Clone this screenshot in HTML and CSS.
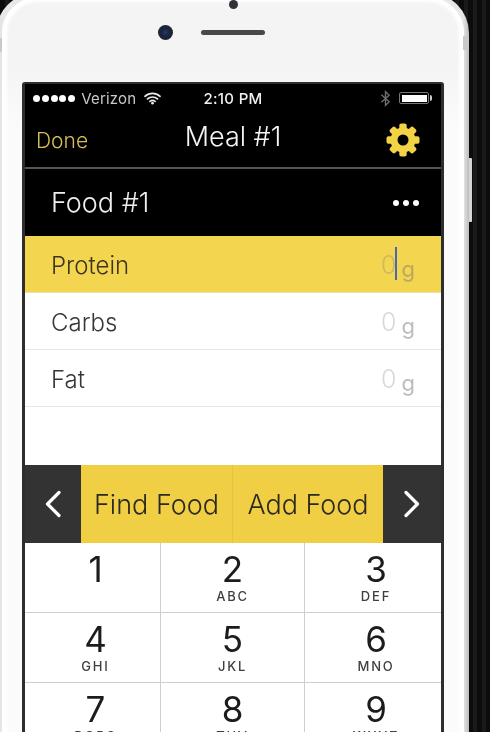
FILE: index.html
```html
<!DOCTYPE html>
<html lang="en">
<head>
<meta charset="utf-8">
<title>Meal #1</title>
<link rel="stylesheet" href="styles.css">
</head>
<body>
<div class="stage">
  <div class="phone">
    <span class="band band-left"></span>
    <span class="band band-right"></span>
    <span class="side-button"></span>
    <div class="face">
      <div class="sensors">
        <span class="sensor-dot"></span>
        <span class="speaker"><span class="camera"></span></span>
      </div>
      <div class="screen">
        <div class="status">
          <div class="status-left">
            <span class="signal"><i></i><i></i><i></i><i></i><i></i></span>
            <span class="carrier">Verizon</span>
            <svg class="wifi" viewBox="0 0 18 14" aria-hidden="true">
              <path d="M1 5.2C5.6 1 12.4 1 17 5.2M3.7 8C6.8 5.3 11.2 5.3 14.300 8M6.300 10.600C7.900 9.300 10.100 9.300 11.700 10.600"/>
              <circle cx="9" cy="12.500" r="1.400"/>
            </svg>
          </div>
          <span class="time">2:10 PM</span>
          <div class="status-right">
            <svg class="bluetooth" viewBox="0 0 12 18" aria-hidden="true">
              <path d="M1.500 5L10 12.500L6 16.500V1.500L10 5.500L1.500 13"/>
            </svg>
            <span class="battery"><span class="battery-fill"></span></span>
          </div>
        </div>
        <div class="nav">
          <span class="done">Done</span>
          <span class="nav-title">Meal #1</span>
          <svg class="gear" viewBox="0 0 34 34" aria-hidden="true">
            <rect x="13.300" y="0.500" width="7.400" height="33" rx="2"/>
            <rect x="13.300" y="0.500" width="7.400" height="33" rx="2" transform="rotate(45 17 17)"/>
            <rect x="13.300" y="0.500" width="7.400" height="33" rx="2" transform="rotate(90 17 17)"/>
            <rect x="13.300" y="0.500" width="7.400" height="33" rx="2" transform="rotate(135 17 17)"/>
            <circle cx="17" cy="17" r="12.500"/>
            <circle class="gear-hole" cx="17" cy="17" r="5.500"/>
          </svg>
        </div>
        <div class="food-header">
          <span>Food #1</span>
          <span class="more"><i></i><i></i><i></i></span>
        </div>
        <div class="macro macro-active">
          <span>Protein</span>
          <span class="amount"><span class="zero">0</span><span class="caret"></span><span class="unit">g</span></span>
        </div>
        <div class="macro">
          <span>Carbs</span>
          <span class="amount"><span class="zero">0</span><span class="unit">g</span></span>
        </div>
        <div class="macro">
          <span>Fat</span>
          <span class="amount"><span class="zero">0</span><span class="unit">g</span></span>
        </div>
        <div class="blank"></div>
        <div class="actions">
          <span class="arrow">
            <svg viewBox="0 0 18 28" aria-hidden="true"><path d="M15 2.500L3.500 14L15 25.500"/></svg>
          </span>
          <span class="action">Find Food</span>
          <span class="action">Add Food</span>
          <span class="arrow">
            <svg viewBox="0 0 18 28" aria-hidden="true"><path d="M3 2.500L14.500 14L3 25.500"/></svg>
          </span>
        </div>
        <div class="keypad">
          <div class="key"><span class="digit">1</span></div>
          <div class="key"><span class="digit">2</span><span class="letters">ABC</span></div>
          <div class="key"><span class="digit">3</span><span class="letters">DEF</span></div>
          <div class="key"><span class="digit">4</span><span class="letters">GHI</span></div>
          <div class="key"><span class="digit">5</span><span class="letters">JKL</span></div>
          <div class="key"><span class="digit">6</span><span class="letters">MNO</span></div>
          <div class="key"><span class="digit">7</span><span class="letters">PQRS</span></div>
          <div class="key"><span class="digit">8</span><span class="letters">TUV</span></div>
          <div class="key"><span class="digit">9</span><span class="letters">WXYZ</span></div>
        </div>
      </div>
    </div>
  </div>
</div>
</body>
</html>
```

FILE: styles.css
```css
* { box-sizing: border-box; }
html, body { margin: 0; background: #fff; }
body { font-family: Inter, "Liberation Sans", sans-serif; }
i { display: block; }

.stage {
  height: 732px;
  overflow: hidden;
  filter: blur(0.4px);
  background: repeating-linear-gradient(90deg, #0c0c0c 0 5px, #1a1a1a 5px 9px);
}
.phone {
  position: relative;
  width: 473px;
  height: 900px;
  margin: -7px 0 0 -4px;
  padding: 4px 5px 0 6px;
  border-radius: 40px 40px 0 0;
  background: linear-gradient(90deg, #d8d8d8 0, #e8e8e8 6px, #e8e8e8 calc(100% - 6px), #bdbdbd 100%);
}
.band { position: absolute; width: 6px; height: 14px; background: #c9c9c9; }
.band-left { left: 0; top: 45px; }
.band-right { right: 0; top: 43px; }
.side-button {
  position: absolute;
  left: 473px;
  top: 165px;
  width: 3px;
  height: 64px;
  border-radius: 0 1px 1px 0;
  background: #d5d5d5;
}
.face {
  height: 100%;
  padding: 0 20px;
  border-radius: 36px 36px 0 0;
  box-shadow: inset 0 0 3px 5px #fff;
  background: linear-gradient(180deg, #f4f4f5 0, #f4f4f5 70px, #fbfbfb 130px);
}
.sensors {
  height: 85px;
  display: flex;
  flex-direction: column;
  align-items: center;
}
.sensor-dot {
  width: 9px;
  height: 9px;
  margin-top: 3px;
  border-radius: 50%;
  background: #2f3338;
}
.speaker {
  position: relative;
  width: 64px;
  height: 5px;
  margin-top: 21px;
  border-radius: 3px;
  background: #46484b;
}
.camera {
  position: absolute;
  left: -43px;
  top: -5px;
  width: 15px;
  height: 15px;
  border-radius: 50%;
  background: radial-gradient(circle at 50% 50%, #1d3a78 0, #1b2338 40%, #23262c 100%);
}

.screen {
  height: 740px;
  border: solid #2e2e2e;
  border-width: 2px 3px 0;
  border-radius: 3px 3px 0 0;
  background: #fff;
}
.status {
  position: relative;
  height: 40px;
  padding: 0 9px 12px 8px;
  display: flex;
  align-items: center;
  justify-content: space-between;
  background: #000;
}
.status-left { display: flex; align-items: center; gap: 6px; }
.signal { display: flex; gap: 1.800px; }
.signal i { width: 7px; height: 7px; border-radius: 50%; background: #fff; }
.carrier { font-size: 15px; color: #c8c8c8; letter-spacing: 0.200px; }
.wifi { width: 17px; height: 14px; margin-left: 2px; }
.wifi path { fill: none; stroke: #e8e8e8; stroke-width: 1.800; stroke-linecap: round; }
.wifi circle { fill: #e8e8e8; }
.time {
  position: absolute;
  left: 0;
  right: 0;
  top: 5px;
  text-align: center;
  font-size: 15px;
  font-weight: 500;
  letter-spacing: 0.300px;
  color: #f0f0f0;
}
.status-right { display: flex; align-items: center; gap: 8px; }
.bluetooth { width: 11px; height: 17px; }
.bluetooth path { fill: none; stroke: #6e6e6e; stroke-width: 1.500; }
.battery {
  position: relative;
  width: 30px;
  height: 12px;
  padding: 1.500px;
  border: 1px solid #777;
  border-radius: 2px;
  margin-right: 3px;
}
.battery::after {
  content: "";
  position: absolute;
  right: -4px;
  top: 2px;
  width: 2.500px;
  height: 6px;
  border-radius: 0 2px 2px 0;
  background: #ccc;
}
.battery-fill { display: block; height: 100%; background: #fff; }

.nav {
  position: relative;
  height: 45px;
  padding: 0 21px 0 11px;
  display: flex;
  align-items: center;
  justify-content: space-between;
  border-bottom: 2px solid #555;
  background: #000;
}
.done { font-size: 21px; font-weight: 300; color: #d8bf55; margin-top: -11px; }
.nav-title {
  position: absolute;
  left: 0;
  right: 0;
  top: -4px;
  text-align: center;
  font-size: 27px;
  font-weight: 300;
  line-height: 34px;
  color: #f5f5f5;
}
.gear { width: 34px; height: 34px; margin-top: -11px; fill: #f1d345; }
.gear-hole { fill: #000; }

.food-header {
  height: 67px;
  padding: 0 22px 0 26px;
  display: flex;
  align-items: center;
  justify-content: space-between;
  font-size: 27px;
  font-weight: 300;
  color: #eee;
  background: #000;
}
.more { display: flex; gap: 4px; }
.more i { width: 6px; height: 6px; border-radius: 50%; background: #fff; }

.macro {
  height: 57px;
  padding: 2px 26px 0;
  display: flex;
  align-items: center;
  justify-content: space-between;
  border-bottom: 1px solid #e6e6e6;
  font-size: 24px;
  font-weight: 300;
  color: #363636;
  background: #fff;
}
.macro-active { background: #f3d54f; color: #3b3520; border-bottom-color: #ece2b0; }
.amount { position: relative; display: flex; align-items: baseline; gap: 5px; }
.zero { font-size: 25px; font-weight: 300; color: #d9d9d9; }
.unit { font-size: 22px; font-weight: 400; color: #bcbcbc; position: relative; top: 3px; }
.macro-active .zero { color: #cdb95e; }
.macro-active .unit { color: #b9a95f; }
.caret {
  position: absolute;
  left: 13.500px;
  top: -3px;
  width: 2px;
  height: 33px;
  background: #4a67b5;
}

.blank { height: 58px; background: #fff; }

.actions {
  height: 78px;
  display: grid;
  grid-template-columns: 56px 1fr 1fr 58px;
  background: #f0cf45;
}
.arrow {
  display: flex;
  align-items: center;
  justify-content: center;
  background: #333;
}
.arrow svg { width: 18px; height: 28px; }
.arrow path { fill: none; stroke: #fff; stroke-width: 3.200; stroke-linecap: round; stroke-linejoin: round; }
.action {
  display: flex;
  align-items: center;
  justify-content: center;
  font-size: 27px;
  font-weight: 300;
  color: #2c2a20;
}
.action + .action { border-left: 1px solid #e3c344; }

.keypad {
  display: grid;
  grid-template-columns: 136px 144px 136px;
  grid-auto-rows: 70px;
  background: #fff;
}
.key {
  padding-top: 8px;
  display: flex;
  flex-direction: column;
  align-items: center;
  border: solid #cfcfcf;
  border-width: 0 1px 1px 0;
}
.key:nth-child(3n) { border-right: 0; padding-left: 6px; }
.key:nth-child(3n+1) { padding-left: 6px; }
.digit { font-size: 35px; font-weight: 400; line-height: 36px; color: #1c1c1c; }
.letters {
  margin-top: 1px;
  font-size: 13px;
  font-weight: 500;
  line-height: 16px;
  letter-spacing: 1.800px;
  color: #3f3f3f;
}
```
